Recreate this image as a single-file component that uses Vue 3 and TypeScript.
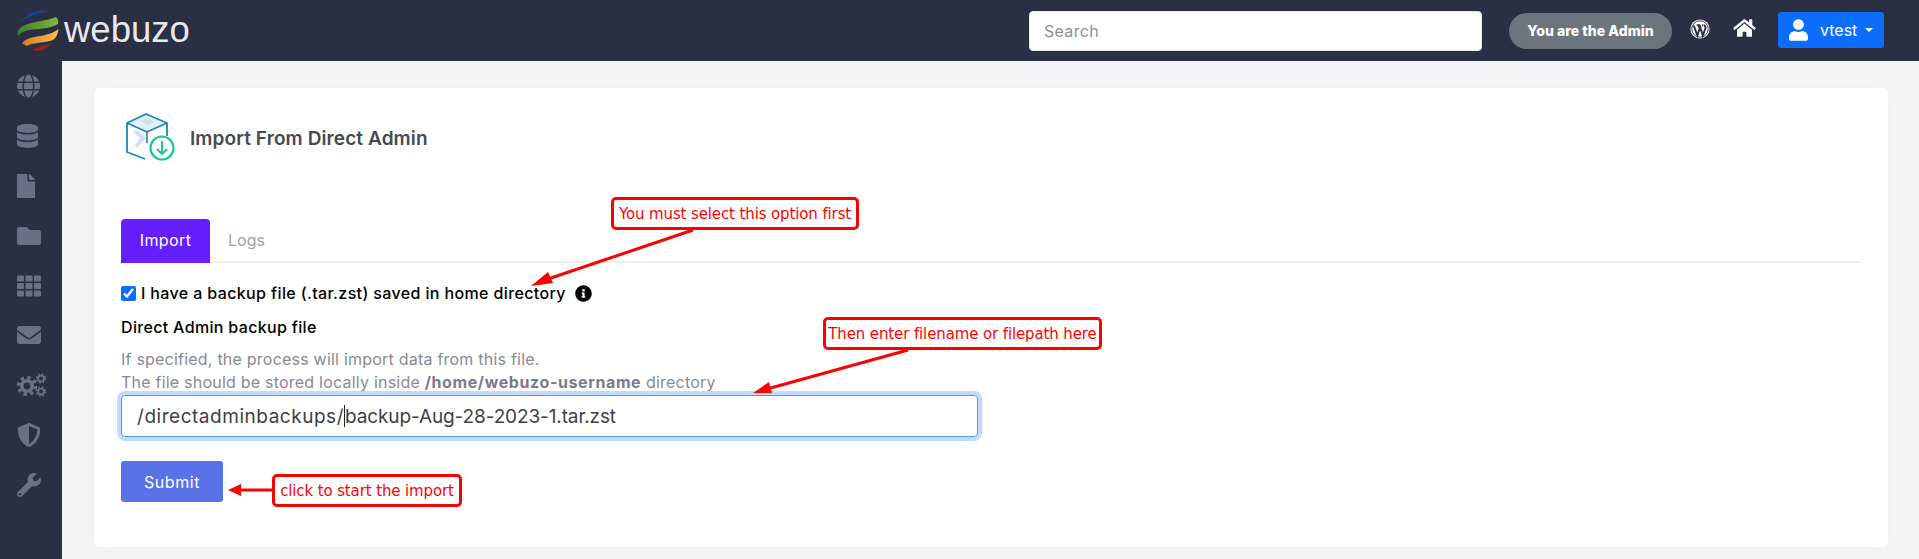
<script setup lang="ts">
interface SideIcon { name: string; box: string; d: string; w: number; h: number }

const sideIcons: SideIcon[] = [
  { name: 'globe', box: '0 0 496 512', w: 23, h: 24, d: 'M336.5 160C322 70.7 287.8 8 248 8s-74 62.7-88.5 152h177zM152 256c0 22.2 1.2 43.5 3.3 64h185.3c2.1-20.5 3.3-41.8 3.3-64s-1.2-43.5-3.3-64H155.3c-2.1 20.5-3.3 41.8-3.3 64zm324.7-96c-28.6-67.9-86.5-120.4-158-141.6 24.4 33.8 41.2 84.7 50 141.6h108zM177.2 18.4C105.8 39.6 47.8 92.1 19.3 160h108c8.7-56.9 25.5-107.8 49.9-141.6zM487.4 192H372.7c2.1 21 3.3 42.5 3.3 64s-1.2 43-3.3 64h114.6c5.5-20.5 8.6-41.8 8.6-64s-3.1-43.5-8.5-64zM120 256c0-21.5 1.2-43 3.3-64H8.6C3.2 212.5 0 233.8 0 256s3.2 43.5 8.6 64h114.6c-2-21-3.2-42.5-3.2-64zm39.5 96c14.5 89.3 48.7 152 88.5 152s74-62.7 88.5-152h-177zm159.3 141.6c71.4-21.2 129.4-73.7 158-141.6h-108c-8.8 56.9-25.6 107.8-50 141.6zM19.3 352c28.6 67.9 86.5 120.4 158 141.6-24.4-33.8-41.2-84.7-50-141.6h-108z' },
  { name: 'database', box: '0 0 448 512', w: 21, h: 24, d: 'M448 73.143v45.714C448 159.143 347.667 192 224 192S0 159.143 0 118.857V73.143C0 32.857 100.333 0 224 0s224 32.857 224 73.143zM448 176v102.857C448 319.143 347.667 352 224 352S0 319.143 0 278.857V176c48.125 33.143 136.208 48.572 224 48.572S399.874 209.143 448 176zm0 160v102.857C448 479.143 347.667 512 224 512S0 479.143 0 438.857V336c48.125 33.143 136.208 48.572 224 48.572S399.874 369.143 448 336z' },
  { name: 'file', box: '0 0 384 512', w: 18, h: 24, d: 'M224 136V0H24C10.7 0 0 10.7 0 24v464c0 13.3 10.7 24 24 24h336c13.3 0 24-10.7 24-24V160H248c-13.2 0-24-10.8-24-24zm160-14.1v6.1H256V0h6.1c6.4 0 12.5 2.5 17 7l97.9 98c4.5 4.5 7 10.6 7 16.9z' },
  { name: 'folder', box: '0 0 512 512', w: 24, h: 24, d: 'M464 128H272l-64-64H48C21.49 64 0 85.49 0 112v288c0 26.51 21.49 48 48 48h416c26.51 0 48-21.49 48-48V176c0-26.51-21.49-48-48-48z' },
  { name: 'grid', box: '0 0 512 512', w: 24, h: 24, d: 'M149.333 56v80c0 13.255-10.745 24-24 24H24c-13.255 0-24-10.745-24-24V56c0-13.255 10.745-24 24-24h101.333c13.255 0 24 10.745 24 24zm181.334 240v-80c0-13.255-10.745-24-24-24H205.333c-13.255 0-24 10.745-24 24v80c0 13.255 10.745 24 24 24h101.333c13.256 0 24.001-10.745 24.001-24zm32-240v80c0 13.255 10.745 24 24 24H488c13.255 0 24-10.745 24-24V56c0-13.255-10.745-24-24-24H386.667c-13.255 0-24 10.745-24 24zm-32 80V56c0-13.255-10.745-24-24-24H205.333c-13.255 0-24 10.745-24 24v80c0 13.255 10.745 24 24 24h101.333c13.256 0 24.001-10.745 24.001-24zm-205.334 56H24c-13.255 0-24 10.745-24 24v80c0 13.255 10.745 24 24 24h101.333c13.255 0 24-10.745 24-24v-80c0-13.255-10.745-24-24-24zM0 376v80c0 13.255 10.745 24 24 24h101.333c13.255 0 24-10.745 24-24v-80c0-13.255-10.745-24-24-24H24c-13.255 0-24 10.745-24 24zm386.667-56H488c13.255 0 24-10.745 24-24v-80c0-13.255-10.745-24-24-24H386.667c-13.255 0-24 10.745-24 24v80c0 13.255 10.745 24 24 24zm0 160H488c13.255 0 24-10.745 24-24v-80c0-13.255-10.745-24-24-24H386.667c-13.255 0-24 10.745-24 24v80c0 13.255 10.745 24 24 24zM181.333 376v80c0 13.255 10.745 24 24 24h101.333c13.255 0 24-10.745 24-24v-80c0-13.255-10.745-24-24-24H205.333c-13.255 0-24 10.745-24 24z' },
  { name: 'mail', box: '0 0 512 512', w: 24, h: 24, d: 'M502.3 190.8c3.9-3.1 9.7-.2 9.7 4.7V400c0 26.5-21.5 48-48 48H48c-26.5 0-48-21.5-48-48V195.6c0-5 5.7-7.8 9.7-4.7 22.4 17.4 52.1 39.5 154.1 113.6 21.1 15.4 56.7 47.8 92.2 47.6 35.7.3 72-32.8 92.3-47.6 102-74.1 131.6-96.3 154-113.7zM256 320c23.2.4 56.6-29.2 73.4-41.4 132.7-96.3 142.8-104.7 173.4-128.7 5.8-4.5 9.2-11.5 9.2-18.9v-19c0-26.5-21.5-48-48-48H48C21.5 64 0 85.5 0 112v19c0 7.4 3.4 14.3 9.2 18.9 30.6 23.9 40.7 32.4 173.4 128.7 16.8 12.2 50.2 41.8 73.4 41.4z' },
  { name: 'gears', box: '', w: 30, h: 24, d: '' },
  { name: 'shield', box: '0 0 512 512', w: 24, h: 24, d: 'M466.5 83.7l-192-80a48.15 48.15 0 0 0-36.9 0l-192 80C27.7 91.1 16 108.6 16 128c0 198.5 114.5 335.7 221.5 380.3 11.8 4.9 25.1 4.9 36.9 0C360.1 472.6 496 349.3 496 128c0-19.4-11.7-36.9-29.5-44.3zM256.1 446.3l-.1-381 175.9 73.3c-3.3 151.4-82.1 261.1-175.8 307.7z' },
  { name: 'wrench', box: '0 0 512 512', w: 24, h: 24, d: 'M507.73 109.1c-2.24-9.03-13.54-12.09-20.12-5.51l-74.36 74.36-67.88-11.31-11.31-67.88 74.36-74.36c6.62-6.62 3.43-17.9-5.66-20.16-47.38-11.74-99.55.91-136.58 37.93-39.64 39.64-50.55 97.1-34.05 147.2L18.74 402.76c-24.99 24.99-24.99 65.51 0 90.5 24.99 24.99 65.51 24.99 90.5 0l213.21-213.21c50.12 16.71 107.47 5.68 147.37-34.22 37.07-37.07 49.7-89.32 37.91-136.73zM64 472c-13.25 0-24-10.75-24-24 0-13.26 10.75-24 24-24s24 10.74 24 24c0 13.25-10.75 24-24 24z' }
]

const gears = [
  { x: 10, y: 13, r: 5.2, sw: 3.6, tr: 8.4, tw: 3.6, dash: 3.3 },
  { x: 24, y: 5.5, r: 2.9, sw: 1.8, tr: 4.3, tw: 1.9, dash: 1.7 },
  { x: 24, y: 18.5, r: 2.9, sw: 1.8, tr: 4.3, tw: 1.9, dash: 1.7 }
]

const callouts = [
  { text: 'You must select this option first', cls: 'c1' },
  { text: 'Then enter filename or filepath here', cls: 'c2' },
  { text: 'click to start the import', cls: 'c3' }
]

const arrows = [
  { line: '693,230 545,280', head: '531,286 548,272 553,283' },
  { line: '908,350 767,389', head: '753,393 769,382 772,393' },
  { line: '272,490 240,490', head: '228,490 241,484 241,496' }
]
</script>

<template>
  <div class="page">
    <header class="topbar">
      <div class="brand">
        <svg class="logo" viewBox="0 0 42 42" width="42" height="42">
          <defs>
            <linearGradient id="gr" x1="0" x2="1" y1="0" y2="0">
              <stop offset="0" stop-color="#3f7d2c" />
              <stop offset="0.6" stop-color="#62a036" />
              <stop offset="1" stop-color="#8ab43f" />
            </linearGradient>
            <linearGradient id="or" x1="0" x2="1" y1="0" y2="0">
              <stop offset="0" stop-color="#d5762b" />
              <stop offset="0.6" stop-color="#efa63d" />
              <stop offset="1" stop-color="#f5c257" />
            </linearGradient>
          </defs>
          <path d="M3 14C7 7 15 2 24 1C27 1 30 2 31 3C22 3 11 8 3 14z" fill="#1e3f8a" />
          <path d="M1 27C0 22 2 19 6 17C16 12 30 12 39 8C41 10 41.5 12 41 15C35 19 22 20 12 21C7 22 3 24 1 27z" fill="url(#gr)" />
          <path d="M5 34C10 28 20 28 28 26C33 25 38 23 41.5 20C41 25 39 29 36 31C28 34 16 33 10 37C8 36 6 35 5 34z" fill="url(#or)" />
          <path d="M15 41C20 37 29 37 35 33C32 38 27 41 21 42C19 42 17 42 15 41z" fill="#9c1d22" />
        </svg>
        <span class="wordmark">webuzo</span>
      </div>
      <div class="top-right">
        <input class="search" type="text" placeholder="Search" />
        <span class="admin-badge">You are the Admin</span>
        <svg class="wp" viewBox="0 0 20 20" width="20" height="20">
          <circle cx="10" cy="10" r="9.6" fill="#fff" />
          <circle cx="10" cy="10" r="8.2" fill="none" stroke="#2a2f43" stroke-width="0.9" />
          <path d="M3.8 6.6 7.4 16.6 9.7 9.6 8.6 6.4M6.7 6.2H10.4M9.7 6.4 12.8 16.6 15.4 9.2C15.8 7.8 15 6.4 13.6 6.2M12 6.2H13" fill="none" stroke="#2a2f43" stroke-width="1.9" />
        </svg>
        <svg class="home" viewBox="0 0 576 512" width="23" height="20">
          <path fill="#fff" d="M280.37 148.26L96 300.11V464a16 16 0 0 0 16 16l112.06-.29a16 16 0 0 0 15.92-16V368a16 16 0 0 1 16-16h64a16 16 0 0 1 16 16v95.64a16 16 0 0 0 16 16.05L464 480a16 16 0 0 0 16-16V300L295.67 148.26a12.19 12.19 0 0 0-15.3 0zM571.6 251.47L488 182.56V44.05a12 12 0 0 0-12-12h-56a12 12 0 0 0-12 12v72.61L318.47 43a48 48 0 0 0-61 0L4.34 251.47a12 12 0 0 0-1.6 16.9l25.5 31A12 12 0 0 0 45.15 301l235.22-193.74a12.19 12.19 0 0 1 15.3 0L530.9 301a12 12 0 0 0 16.9-1.6l25.5-31a12 12 0 0 0-1.7-16.93z" />
        </svg>
        <button class="user-btn" type="button">
          <svg viewBox="0 0 448 512" width="19" height="22">
            <path fill="#fff" d="M224 256c70.7 0 128-57.3 128-128S294.7 0 224 0 96 57.3 96 128s57.3 128 128 128zm89.6 32h-16.7c-22.2 10.2-46.9 16-72.9 16s-50.6-5.8-72.9-16h-16.7C60.2 288 0 348.2 0 422.4V464c0 26.5 21.5 48 48 48h352c26.5 0 48-21.5 48-48v-41.6c0-74.2-60.2-134.4-134.4-134.4z" />
          </svg>
          <span>vtest</span>
          <i class="caret"></i>
        </button>
      </div>
    </header>

    <div class="body-row">
      <nav class="sidebar">
        <div v-for="icon in sideIcons" :key="icon.name" class="side-item">
          <svg v-if="icon.name === 'gears'" viewBox="0 0 30 24" :width="icon.w" :height="icon.h">
            <g v-for="(g, i) in gears" :key="i">
              <circle :cx="g.x" :cy="g.y" :r="g.r" fill="none" stroke="#6b7088" :stroke-width="g.sw" />
              <circle :cx="g.x" :cy="g.y" :r="g.tr" fill="none" stroke="#6b7088" :stroke-width="g.tw" :stroke-dasharray="`${g.dash} ${g.dash}`" />
            </g>
          </svg>
          <svg v-else :viewBox="icon.box" :width="icon.w" :height="icon.h">
            <path fill="#6b7088" :d="icon.d" />
          </svg>
        </div>
      </nav>

      <main class="content">
        <section class="card">
          <div class="title-row">
            <svg class="title-icon" viewBox="0 0 50 48" width="50" height="48">
              <path d="M2 10 21 1 42 10 22 19z" fill="#e3f0f8" />
              <path d="M22 19V30" stroke="#1c84c4" stroke-width="1.6" fill="none" />
              <path d="M20 46 2 39V10L21 1 42 10V23M2 10 22 19 42 10" stroke="#1c84c4" stroke-width="1.8" fill="none" stroke-linejoin="round" />
              <path d="M8 19l7 6-5 7 2 3 9-10-9-8zM15 8l7-3 8 4-7 3z" fill="#c9e1ef" />
              <circle cx="37" cy="35" r="11.5" fill="#fff" stroke="#1ec88b" stroke-width="2.2" />
              <path d="M37 28v13M32 36l5 5 5-5" fill="none" stroke="#1ec88b" stroke-width="2" />
            </svg>
            <h1>Import From Direct Admin</h1>
          </div>

          <div class="tabs">
            <span class="tab active">Import</span>
            <span class="tab">Logs</span>
          </div>

          <form class="form" @submit.prevent>
            <label class="check-row">
              <input type="checkbox" checked />
              <span>I have a backup file (.tar.zst) saved in home directory</span>
              <svg viewBox="0 0 512 512" width="17" height="17">
                <path fill="#000" d="M256 8C119.043 8 8 119.083 8 256c0 136.997 111.043 248 248 248s248-111.003 248-248C504 119.083 392.957 8 256 8zm0 110c23.196 0 42 18.804 42 42s-18.804 42-42 42-42-18.804-42-42 18.804-42 42-42zm56 254c0 6.627-5.373 12-12 12h-88c-6.627 0-12-5.373-12-12v-24c0-6.627 5.373-12 12-12h12v-64h-12c-6.627 0-12-5.373-12-12v-24c0-6.627 5.373-12 12-12h64c6.627 0 12 5.373 12 12v100h12c6.627 0 12 5.373 12 12v24z" />
              </svg>
            </label>
            <div class="field-label">Direct Admin backup file</div>
            <p class="help">
              If specified, the process will import data from this file.<br />
              The file should be stored locally inside <b>/home/webuzo-username</b> directory
            </p>
            <div class="file-input"><span class="path-a">/directadminbackups/</span><i class="cursor"></i><span class="path-b">backup-Aug-28-2023-1.tar.zst</span></div>
            <button class="submit" type="submit">Submit</button>
          </form>
        </section>
      </main>
    </div>

    <svg class="arrows" width="1919" height="559" viewBox="0 0 1919 559">
      <g v-for="(a, i) in arrows" :key="i">
        <polyline :points="a.line" fill="none" stroke="#f00" stroke-width="3" />
        <polygon :points="a.head" fill="#f00" />
      </g>
    </svg>
    <div v-for="c in callouts" :key="c.cls" class="callout" :class="c.cls">{{ c.text }}</div>
  </div>
</template>

<style>
html, body { margin: 0; padding: 0; background: #f4f5f8; overflow: hidden; }
</style>

<style scoped>
.page {
  position: relative;
  width: 1919px;
  height: 559px;
  overflow: hidden;
  font-family: Inter, "Open Sans", sans-serif;
  background: #f4f5f8;
}
.topbar {
  height: 61px;
  background: #2a2f43;
  display: flex;
  align-items: center;
  justify-content: space-between;
  padding: 0 35px 0 17px;
  box-sizing: border-box;
}
.brand { display: flex; align-items: center; gap: 5px; margin-top: -1px; }
.wordmark {
  font-family: "Liberation Sans", Arial, sans-serif;
  font-size: 36.5px;
  color: #e8e8ec;
  line-height: 40px;
}
.top-right { display: flex; align-items: center; }
.search {
  width: 453px;
  height: 40px;
  box-sizing: border-box;
  border: 1px solid #e3e5ea;
  border-radius: 4px;
  padding: 0 14px;
  background: #fff;
  font: 16px Inter, sans-serif;
  letter-spacing: 0.3px;
  margin-right: 27px;
  outline: none;
}
.search::placeholder { color: #8f9197; opacity: 1; }
.admin-badge {
  width: 163px;
  height: 36px;
  border-radius: 18px;
  background: #6c757d;
  color: #fff;
  font-size: 14px;
  font-weight: 800;
  letter-spacing: 0.05px;
  display: flex;
  align-items: center;
  justify-content: center;
  margin-right: 18px;
}
.wp { margin-right: 23px; margin-top: -4px; }
.home { margin-right: 22px; margin-top: -6px; }
.user-btn {
  width: 106px;
  height: 36px;
  background: #0d6efd;
  border: 0;
  border-radius: 3px;
  color: #fff;
  font: 16px Inter, sans-serif;
  display: flex;
  align-items: center;
  padding: 0 0 0 11px;
  box-sizing: border-box;
  margin-top: -2px;
}
.user-btn span { margin-left: 12px; }
.caret {
  margin-left: 8px;
  width: 0;
  height: 0;
  border-left: 4px solid transparent;
  border-right: 4px solid transparent;
  border-top: 4px solid #fff;
}
.body-row { display: flex; height: 498px; }
.sidebar {
  width: 62px;
  background: #2a2f43;
  flex: none;
  display: flex;
  flex-direction: column;
  box-sizing: border-box;
}
.side-item {
  height: 49.9px;
  display: flex;
  align-items: center;
  padding-left: 17px;
  flex: none;
}
.content { flex: 1; padding: 27px 31px 12px 32px; min-width: 0; }
.card {
  background: #fff;
  height: 459px;
  border-radius: 5px;
  box-sizing: border-box;
  padding: 25px 27px 0;
  box-shadow: 0 0 20px rgba(120, 125, 150, 0.05);
}
.title-row { display: flex; align-items: center; gap: 15px; padding-left: 4px; height: 48px; }
.title-row h1 {
  margin: 2px 0 0;
  font-size: 19px;
  font-weight: 600;
  color: #464a53;
  letter-spacing: 0.1px;
}
.tabs {
  display: flex;
  margin-top: 58px;
  border-bottom: 2px solid #efefef;
  height: 44px;
  box-sizing: border-box;
}
.tab {
  display: flex;
  align-items: center;
  padding: 0 18px 2px;
  font-size: 16px;
  color: #a1a1a8;
  height: 44px;
  box-sizing: border-box;
  flex: none;
}
.tab.active {
  background: #651fff;
  color: #fff;
  border-radius: 4px 4px 0 0;
  width: 89px;
  justify-content: center;
  padding: 0 0 2px;
  letter-spacing: 0.4px;
}
.form { padding-top: 20px; }
.check-row {
  display: flex;
  align-items: center;
  font-size: 16px;
  font-weight: 500;
  letter-spacing: 0.37px;
  color: #000;
  height: 20px;
}
.check-row input {
  width: 15px;
  height: 15px;
  margin: 0 5px 0 0;
  accent-color: #0d6efd;
}
.check-row svg { margin-left: 9px; }
.field-label {
  margin-top: 14px;
  font-size: 16px;
  font-weight: 500;
  letter-spacing: 0.33px;
  color: #000;
  line-height: 20px;
}
.help {
  margin: 11px 0 0;
  font-size: 16px;
  letter-spacing: 0.22px;
  line-height: 23px;
  color: #868a96;
}
.help b { font-weight: 700; color: #777b8a; letter-spacing: 0.6px; }
.file-input {
  margin-top: 1px;
  width: 857px;
  height: 42px;
  box-sizing: border-box;
  border: 1px solid #4c9be0;
  border-radius: 4px;
  box-shadow: 0 0 0 4px #c2dbfe;
  padding-left: 15px;
  font-size: 19px;
  color: #3d3f46;
  display: flex;
  align-items: center;
  white-space: pre;
}
.path-a { letter-spacing: 0.53px; }
.path-b { letter-spacing: -0.12px; }
.cursor { display: inline-block; width: 1px; height: 22px; background: #222; }
.submit {
  display: block;
  margin-top: 24px;
  width: 102px;
  height: 41px;
  background: #5a72e8;
  color: #fff;
  border: 0;
  border-radius: 3px;
  font: 16px Inter, sans-serif;
  letter-spacing: 0.6px;
}
.arrows { position: absolute; left: 0; top: 0; pointer-events: none; }
.callout {
  position: absolute;
  box-sizing: border-box;
  height: 33px;
  border: 3px solid #f00;
  border-radius: 5px;
  background: #fff;
  color: #f00;
  font-family: "DejaVu Sans", sans-serif;
  font-size: 15px;
  letter-spacing: -0.12px;
  display: flex;
  align-items: center;
  justify-content: center;
  white-space: nowrap;
}
.c1 { left: 611px; top: 197px; width: 248px; }
.c2 { left: 823px; top: 317px; width: 279px; }
.c3 { left: 272px; top: 474px; width: 190px; }
</style>
